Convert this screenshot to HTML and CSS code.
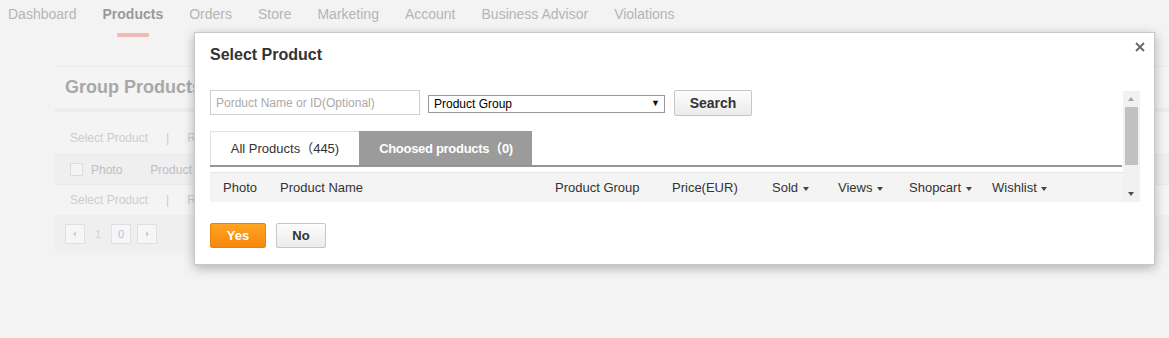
FILE: index.html
```html
<!DOCTYPE html>
<html lang="en">
<head>
    <meta charset="UTF-8">
    <meta name="viewport" content="width=device-width, initial-scale=1.0">
    <title>Group Products - Select Product</title>
    <link rel="stylesheet" href="styles.css">
</head>
<body>

<nav class="topnav">
    <a class="nav-item">Dashboard</a>
    <a class="nav-item active">Products</a>
    <a class="nav-item">Orders</a>
    <a class="nav-item">Store</a>
    <a class="nav-item">Marketing</a>
    <a class="nav-item">Account</a>
    <a class="nav-item">Business Advisor</a>
    <a class="nav-item">Violations</a>
</nav>

<main class="page">
    <section class="group-card">
        <h2 class="group-title">Group Products</h2>
        <div class="group-toolbar first">
            <span>Select Product</span><span class="sep">|</span><span>Remove Product</span>
        </div>
        <div class="group-thead">
            <span class="fake-check"></span>
            <span class="th-photo">Photo</span>
            <span>Product Name</span>
        </div>
        <div class="group-toolbar">
            <span>Select Product</span><span class="sep">|</span><span>Remove Product</span>
        </div>
        <div class="group-pager">
            <span class="pg-btn pg-prev"></span>
            <span class="pg-num">1</span>
            <span class="pg-btn pg-input">0</span>
            <span class="pg-btn pg-next"></span>
        </div>
    </section>
</main>

<div class="modal">
    <button type="button" class="modal-close" aria-label="Close">
        <svg width="10" height="10" viewBox="0 0 10 10"><path d="M1 1L9 9M9 1L1 9" stroke="#666" stroke-width="1.8"/></svg>
    </button>
    <h3 class="modal-title">Select Product</h3>

    <div class="modal-body">
        <div class="scroll-content">
            <div class="search-row">
                <input type="text" class="search-input" placeholder="Porduct Name or ID(Optional)">
                <div class="select-wrap">
                    <select class="group-select">
                        <option>Product Group</option>
                    </select>
                </div>
                <button type="button" class="btn btn-search">Search</button>
            </div>

            <div class="tabs">
                <span class="tab">All Products（445)</span>
                <span class="tab tab-active">Choosed products（0)</span>
            </div>

            <table class="product-table">
                <colgroup>
                    <col class="c-photo">
                    <col class="c-name">
                    <col class="c-group">
                    <col class="c-price">
                    <col class="c-sold">
                    <col class="c-views">
                    <col class="c-cart">
                    <col>
                </colgroup>
                <thead>
                    <tr>
                        <th>Photo</th>
                        <th>Product Name</th>
                        <th>Product Group</th>
                        <th>Price(EUR)</th>
                        <th>Sold <span class="caret"></span></th>
                        <th>Views <span class="caret"></span></th>
                        <th>Shopcart <span class="caret"></span></th>
                        <th>Wishlist <span class="caret"></span></th>
                    </tr>
                </thead>
            </table>
        </div>
        <div class="scrollbar">
            <span class="sb-btn sb-up"></span>
            <span class="sb-track"><span class="sb-thumb"></span></span>
            <span class="sb-btn sb-down"></span>
        </div>
    </div>

    <div class="modal-actions">
        <button type="button" class="btn btn-yes">Yes</button>
        <button type="button" class="btn btn-no">No</button>
    </div>
</div>

</body>
</html>
```

FILE: styles.css
```css
body {
    font-family: "Liberation Sans", Arial, "Noto Sans CJK SC", sans-serif;
    background-color: #f3f3f3;
    margin: 0;
    padding: 0;
    overflow: hidden;
    height: 338px;
}

/* top navigation (behind the overlay) */
.topnav {
    display: flex;
    gap: 26px;
    height: 44px;
    padding-left: 8px;
}
.nav-item {
    display: flex;
    flex-direction: column;
    align-items: center;
    font-size: 14px;
    line-height: 28px;
    color: #b5b5b5;
}
.nav-item.active {
    color: #9a9a9a;
    font-weight: bold;
}
.nav-item.active::after {
    content: "";
    display: block;
    width: 32px;
    height: 4px;
    margin-top: 5px;
    background-color: #f3b8b8;
    border-radius: 1px;
}

/* faded page content */
.page {
    padding: 22px 0 0 55px;
}
.group-card {
    background-color: #f4f4f4;
    border-top: 1px solid #ebebeb;
}
.group-title {
    margin: 0;
    height: 41px;
    display: flex;
    align-items: center;
    padding-left: 10px;
    font-size: 18px;
    color: #a8a8a8;
    border-bottom: 4px solid #ececec;
}
.group-toolbar {
    display: flex;
    align-items: center;
    height: 30px;
    padding-left: 15px;
    font-size: 12px;
    color: #cdcdcd;
    width: 125px;
    overflow: hidden;
    white-space: nowrap;
}
.group-toolbar.first {
    height: 33px;
    margin-top: 9px;
}
.group-toolbar .sep {
    margin: 0 18px 0 18px;
}
.group-thead {
    display: flex;
    align-items: center;
    height: 29px;
    padding-left: 15px;
    background-color: #efefef;
    border-top: 1px solid #e9e9e9;
    border-bottom: 1px solid #e9e9e9;
    font-size: 12px;
    color: #c0c0c0;
    overflow: hidden;
    white-space: nowrap;
}
.fake-check {
    width: 11px;
    height: 11px;
    border: 1px solid #dcdcdc;
    background-color: #f4f4f4;
    margin-right: 8px;
}
.th-photo {
    margin-right: 28px;
}
.group-pager {
    display: flex;
    align-items: center;
    gap: 6px;
    height: 38px;
    padding-left: 10px;
    background-color: #efefef;
}
.pg-btn {
    width: 18px;
    height: 18px;
    border: 1px solid #e0e0e0;
    background-color: #f6f6f6;
    font-size: 11px;
    color: #a9c5e3;
    text-align: center;
    line-height: 18px;
    position: relative;
}
.pg-num {
    font-size: 11px;
    color: #cfcfcf;
    padding: 0 4px;
}
.pg-prev::after, .pg-next::after {
    content: "";
    position: absolute;
    top: 6px;
    border-top: 3px solid transparent;
    border-bottom: 3px solid transparent;
}
.pg-prev::after {
    left: 7px;
    border-right: 3px solid #d0d0d0;
}
.pg-next::after {
    left: 8px;
    border-left: 3px solid #b8cfe6;
}

/* modal */
.modal {
    position: absolute;
    left: 194px;
    top: 32px;
    width: 961px;
    box-sizing: border-box;
    background-color: #fff;
    border: 1px solid #c8c8c8;
    box-shadow: 0 3px 10px rgba(0, 0, 0, 0.28);
    padding: 0 14px 16px 15px;
}
.modal-close {
    position: absolute;
    top: 9px;
    right: 9px;
    padding: 0;
    border: none;
    background: none;
    width: 10px;
    height: 10px;
    cursor: pointer;
}
.modal-close svg {
    display: block;
}
.modal-title {
    margin: 0;
    padding-top: 12px;
    font-size: 16px;
    line-height: 20px;
    color: #333;
}
.modal-body {
    display: flex;
    margin-top: 25px;
    height: 112px;
}
.scroll-content {
    flex: 1;
    overflow: hidden;
}
.scrollbar {
    display: flex;
    flex-direction: column;
    width: 17px;
    margin-top: 1px;
    background-color: #f1f1f1;
}
.sb-btn {
    height: 16px;
    position: relative;
}
.sb-btn::after {
    content: "";
    position: absolute;
    left: 5px;
    border-left: 3.5px solid transparent;
    border-right: 3.5px solid transparent;
}
.sb-up::after {
    top: 6px;
    border-bottom: 4px solid #a3a3a3;
}
.sb-down::after {
    top: 6px;
    border-top: 4px solid #505050;
}
.sb-track {
    flex: 1;
    padding: 0 2px;
}
.sb-thumb {
    display: block;
    height: 58px;
    background-color: #c1c1c1;
}

.search-row {
    display: flex;
    align-items: center;
    height: 26px;
}
.search-input {
    box-sizing: border-box;
    width: 210px;
    height: 25px;
    margin: 0;
    padding: 0 5px;
    border: 1px solid #cfcfcf;
    font-family: inherit;
    font-size: 12px;
    align-self: flex-start;
}
.search-input::placeholder {
    color: #aaa;
}
.select-wrap {
    position: relative;
    margin-left: 8px;
}
.select-wrap::after {
    content: "\25BC";
    position: absolute;
    right: 5px;
    top: 4px;
    font-size: 9px;
    color: #111;
    pointer-events: none;
}
.group-select {
    -webkit-appearance: none;
    appearance: none;
    box-sizing: border-box;
    width: 237px;
    height: 18px;
    margin: 0;
    padding: 0 5px;
    border: 1px solid #9a9a9a;
    border-radius: 0;
    background-color: #fff;
    font-family: inherit;
    font-size: 12px;
    color: #000;
}
.btn {
    box-sizing: border-box;
    font-family: inherit;
    font-weight: bold;
    font-size: 13px;
    border-radius: 2px;
    cursor: pointer;
    padding: 0;
}
.btn-search, .btn-no {
    color: #333;
    border: 1px solid #c6c6c6;
    background: linear-gradient(#fdfdfd, #ebebeb);
}
.btn-search {
    width: 78px;
    height: 26px;
    margin-left: 9px;
    font-size: 14px;
}

.tabs {
    display: flex;
    margin-top: 15px;
    margin-right: 1px;
    border-bottom: 2px solid #959595;
}
.tab {
    height: 34px;
    line-height: 34px;
    font-size: 13px;
    color: #333;
    text-align: center;
    white-space: nowrap;
    box-sizing: border-box;
    width: 149px;
    border-top: 1px solid #e2e2e2;
    border-left: 1px solid #e2e2e2;
}
.tab-active {
    width: 173px;
    background-color: #9b9b9b;
    border-color: #9b9b9b;
    color: #fff;
    font-weight: bold;
    letter-spacing: -0.3px;
}

.product-table {
    width: 100%;
    margin-top: 5px;
    table-layout: fixed;
    border-collapse: collapse;
}
.c-photo { width: 57px; }
.c-name { width: 275px; }
.c-group { width: 117px; }
.c-price { width: 100px; }
.c-sold { width: 66px; }
.c-views { width: 71px; }
.c-cart { width: 83px; }
.product-table th {
    height: 29px;
    padding: 0 0 0 13px;
    text-align: left;
    font-weight: normal;
    font-size: 13px;
    color: #333;
    background-color: #f4f4f4;
    border-top: 1px solid #e6e6e6;
    white-space: nowrap;
}
.caret {
    display: inline-block;
    vertical-align: middle;
    margin-left: 1px;
    border-top: 4px solid #444;
    border-left: 3px solid transparent;
    border-right: 3px solid transparent;
}

.modal-actions {
    display: flex;
    gap: 10px;
    margin-top: 21px;
}
.btn-yes {
    width: 56px;
    height: 25px;
    color: #fff;
    border: 1px solid #e8820c;
    background: linear-gradient(#ffa423, #f7870c);
}
.btn-no {
    width: 50px;
    height: 25px;
}
```
